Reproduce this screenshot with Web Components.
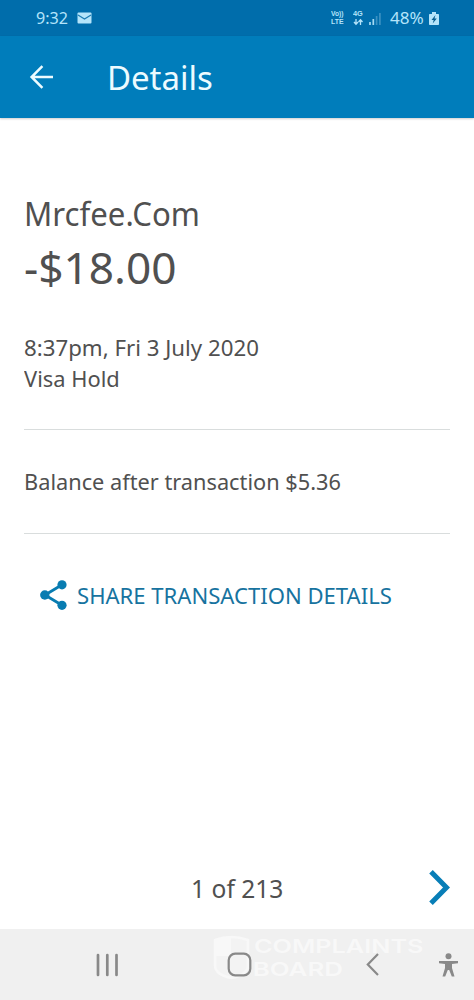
<!DOCTYPE html>
<html lang="en"><head><meta charset="utf-8"><title>Details</title>
<style>html,body{margin:0;height:100%;background:#fff}body{font-family:"Noto Sans","Liberation Sans",sans-serif;color:#505050}</style>
</head><body>
<transaction-screen></transaction-screen>
<script>
const define=(name,html)=>customElements.define(name,class extends HTMLElement{
  connectedCallback(){if(!this.shadowRoot)this.attachShadow({mode:'open'}).innerHTML=html}
});

/* A single line of text whose visible glyphs span exactly the given width. */
customElements.define('fit-text',class extends HTMLElement{
  connectedCallback(){
    if(this.shadowRoot)return;
    const size=+this.getAttribute('size'),width=+this.getAttribute('width'),weight=this.getAttribute('weight')||400;
    const family=this.getAttribute('family')||'Noto Sans';
    const c=document.createElement('canvas').getContext('2d');
    c.font=`${weight} ${size}px "${family}","Liberation Sans",sans-serif`;
    const m=c.measureText(this.textContent.trim());
    const left=m.actualBoundingBoxLeft;
    const scale=width/(m.actualBoundingBoxRight+left);
    this.attachShadow({mode:'open'}).innerHTML=`<style>
      :host{display:block;width:${width}px;flex:none;white-space:nowrap;font-family:"${family}","Liberation Sans",sans-serif;font-size:${size}px;font-weight:${weight}}
      span{display:inline-block;transform-origin:0 50%;transform:translateX(${left*scale}px) scaleX(${scale})}
    </style><span><slot></slot></span>`;
  }
});

define('status-bar',`<style>
  :host{display:flex;height:36px;box-sizing:border-box;padding:0 35px 0 36px;align-items:center;background:#006dab;color:#b4e4fa}
  fit-text{line-height:36px}
  svg{display:block;flex:none}
  .mail{margin-left:9.5px}.right{display:flex;align-items:center;margin-left:auto}
  .stack{display:flex;flex-direction:column}.stack fit-text{line-height:8px}
</style>
<fit-text size="16.5" width="31.5">9:32</fit-text>
<svg class="mail" width="15" height="12" viewBox="0 0 15 12"><rect x=".5" y=".5" width="14" height="11" rx="1" fill="#b4e4fa"/><path d="M1 3l6.5 4L14 3" fill="none" stroke="#1c7db4" stroke-width="1.3"/></svg>
<div class="right">
  <div class="stack"><fit-text family="Liberation Sans" size="7.5" width="13" weight="700">Vo))</fit-text><fit-text family="Liberation Sans" size="7.5" width="12.5" weight="700">LTE</fit-text></div>
  <div class="stack" style="margin-left:9px"><fit-text family="Liberation Sans" size="7.5" width="10" weight="700">4G</fit-text>
    <svg width="10" height="8" viewBox="0 0 10 8"><path d="M3 1v5M1 4l2 2.3L5 4M7.5 7V2M5.5 4l2-2.3L9.5 4" fill="none" stroke="#b4e4fa" stroke-width="1.3"/></svg></div>
  <svg style="margin-left:6px" width="12" height="13" viewBox="0 0 12 13"><path d="M1 10v3M4.3 7v6" stroke="#a5daf3" stroke-width="1.7"/><path d="M7.6 4v9M10.9 1v12" stroke="#3b91c2" stroke-width="1.7"/></svg>
  <fit-text style="margin-left:9.5px" size="16.5" width="33">48%</fit-text>
  <svg style="margin-left:6px" width="10" height="13" viewBox="0 0 10 13"><path d="M3 0h4v2h2.2q.8 0 .8.8v9.4q0 .8-.8.8H.8q-.8 0-.8-.8V2.8Q0 2 .8 2H3z" fill="#b4e4fa"/><path d="M6.5 3L2.5 8h2.2l-1 3.5L7.8 6.5H5.5z" fill="#075f91"/></svg>
</div>`);

define('app-header',`<style>
  :host{display:flex;height:82px;align-items:center;padding-left:29px;box-sizing:border-box;background:#007dbb;color:#ecfbff;box-shadow:0 1px 2px #0003}
  fit-text{margin-left:57px;line-height:82px;padding-top:2px}svg{display:block}
</style>
<svg width="24" height="24" viewBox="0 0 24 24"><path d="M13.4 1.2L2.6 12l10.8 10.8M2.6 12H24" fill="none" stroke="currentColor" stroke-width="2.5"/></svg>
<fit-text size="32" width="101.5">Details</fit-text>`);

define('detail-section',`<style>
  :host{display:block;margin:0 24px;border-bottom:1px solid #d9dddd}
</style><slot></slot>`);

define('share-button',`<style>
  :host{display:flex;align-items:center;height:122px;padding-left:40px;color:#17739f}
  fit-text{margin-left:11px;line-height:30px;padding-top:1px}
</style>
<svg width="27" height="30" viewBox="0 0 27 30"><path d="M22 4.8L5 15l17 10.3" fill="none" stroke="#087cb1" stroke-width="2.8"/><g fill="#087cb1"><circle cx="22" cy="4.8" r="4.6"/><circle cx="4.8" cy="15" r="4.7"/><circle cx="22" cy="25.3" r="4.6"/></g></svg>
<fit-text size="22.5" width="313.5">SHARE TRANSACTION DETAILS</fit-text>`);

define('page-control',`<style>
  :host{display:flex;align-items:center;height:84px;padding:0 24px 0 193px}
  fit-text{line-height:84px;padding-top:1px}svg{margin-left:auto}
</style>
<fit-text size="26" width="89.5">1 of 213</fit-text>
<svg width="21" height="35" viewBox="0 0 21 35"><path d="M2 1.8L17.5 17.5 2 33.2" fill="none" stroke="#087eb7" stroke-width="5"/></svg>`);

define('board-watermark',`<style>
  :host{position:absolute;left:213px;top:6px;display:flex;color:#fafafa;opacity:.85;pointer-events:none}
  .words{display:flex;flex-direction:column;margin-left:4px}fit-text{line-height:23px}
</style>
<svg width="37" height="45" viewBox="0 0 37 45"><path d="M2 5Q18-1 35 5v26q-1 9-16.5 12Q3 40 2 31z" fill="#f4f4f4" stroke="#fafafa" stroke-width="2.5"/><path d="M3 5q8-3 15-3v19H3z" fill="#fafafa"/></svg>
<div class="words"><fit-text family="Inter" size="19" width="169" weight="600">COMPLAINTS</fit-text><fit-text family="Inter" size="19" width="88" weight="600">BOARD</fit-text></div>`);

define('navigation-bar',`<style>
  :host{position:relative;display:grid;grid-template-columns:214px 51px 107px 1fr;height:71px;box-sizing:border-box;background:#f0f0f0;align-items:center;color:#898989}
  svg{position:relative;z-index:1;display:block}
  board-watermark{z-index:0}
</style>
<svg style="margin-left:96px" width="23" height="24" viewBox="0 0 23 24"><path d="M2 2v20M11.3 2v20M20.5 2v20" stroke="currentColor" stroke-width="2.7" stroke-linecap="round"/></svg>
<svg style="margin-left:13px" width="25" height="25" viewBox="0 0 25 25"><rect x="1.7" y="1.7" width="21.6" height="21.6" rx="6.5" fill="none" stroke="currentColor" stroke-width="2.2"/></svg>
<svg style="margin-left:101px" width="13" height="23" viewBox="0 0 13 23"><path d="M12 1L1.8 11.5 12 22" fill="none" stroke="currentColor" stroke-width="2.2"/></svg>
<svg style="margin-left:67px" width="19" height="24" viewBox="0 0 19 24"><g fill="currentColor"><circle cx="9.5" cy="3.2" r="3"/><path d="M0 8h19v2.2l-6 .8v4l2.5 8.5h-2.7L10.2 17H8.8l-2.6 6.5H3.5L6 15v-4l-6-.8z"/></g></svg>
<board-watermark></board-watermark>`);

define('transaction-screen',`<style>
  :host{display:flex;flex-direction:column;width:474px;height:1000px;overflow:hidden;background:#fff}
  .space{flex:1}
  .name{line-height:46px;padding-top:73px}
  .amount{line-height:60px}
  .date{line-height:31px;padding-top:35px}
  .type{line-height:31px;padding-bottom:35px}
  .balance{line-height:102px;padding-top:1px}
  fit-text{margin-left:1px}
  .type fit-text{margin-left:0}
  .name fit-text{margin-left:3px}
  .balance fit-text{margin-left:2px}
</style>
<status-bar></status-bar><app-header></app-header>
<detail-section>
  <div class="name"><fit-text size="32" width="171">Mrcfee.Com</fit-text></div>
  <div class="amount"><fit-text size="44.5" width="150">-$18.00</fit-text></div>
  <div class="date"><fit-text size="22.5" width="233">8:37pm, Fri 3 July 2020</fit-text></div>
  <div class="type"><fit-text size="22.5" width="94">Visa Hold</fit-text></div>
</detail-section>
<detail-section><div class="balance"><fit-text size="22.5" width="314">Balance after transaction $5.36</fit-text></div></detail-section>
<share-button></share-button>
<div class="space"></div>
<page-control></page-control>
<navigation-bar></navigation-bar>`);
</script></body></html>
